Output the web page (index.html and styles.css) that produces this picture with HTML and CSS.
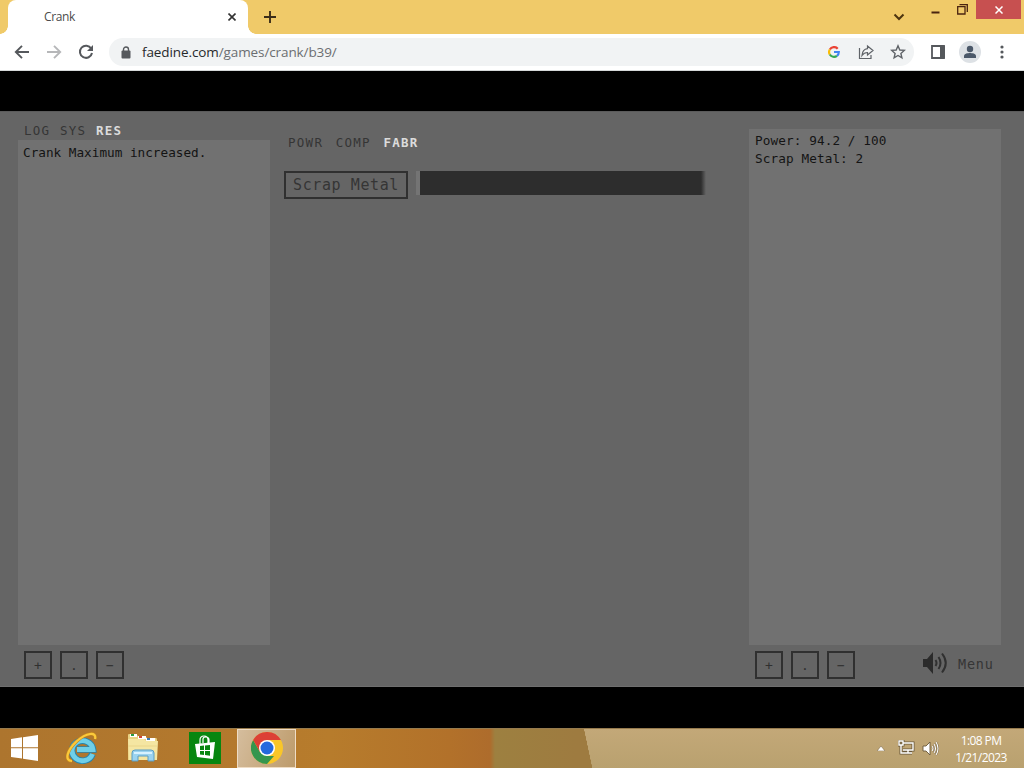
FILE: index.html
```
<!DOCTYPE html>
<html lang="en">
    <head>
        <meta charset="UTF-8">
        <title>Crank</title>
        <link rel="stylesheet" href="styles.css">
    </head>
    <body>
        <div class="titlebar">
            <div class="tab">
                <span class="tab-title">Crank</span>
                <svg class="tab-close" width="8" height="8" viewBox="0 0 8 8"><path d="M0.5 0.5L7.5 7.5M7.5 0.5L0.5 7.5" stroke="#333" stroke-width="1.6"/></svg>
            </div>
            <svg class="new-tab" width="12" height="12" viewBox="0 0 12 12"><path d="M6 0V12M0 6H12" stroke="#3b2d19" stroke-width="1.9"/></svg>
            <div class="window-buttons">
                <svg class="chevron" width="12" height="8" viewBox="0 0 12 8"><path d="M1.5 1.5L6 6L10.5 1.5" fill="none" stroke="#4d3510" stroke-width="2"/></svg>
                <svg class="minimize" width="9" height="3" viewBox="0 0 9 3"><path d="M0.5 1.5H8.5" stroke="#4a2410" stroke-width="2"/></svg>
                <svg class="restore" width="11" height="11" viewBox="0 0 11 11"><path d="M0.7 2.7H8V10H0.7ZM2.5 0.7H10.3V8" fill="none" stroke="#4a2410" stroke-width="1.3"/></svg>
                <div class="close"><svg width="8" height="8" viewBox="0 0 8 8"><path d="M0.5 0.5L7.5 7.5M7.5 0.5L0.5 7.5" stroke="#fff" stroke-width="1.5"/></svg></div>
            </div>
        </div>
        <div class="toolbar">
            <svg class="nav" width="16" height="16" viewBox="0 0 16 16"><path d="M15 8H2M8 1.8L1.8 8L8 14.2" fill="none" stroke="#55585c" stroke-width="1.9"/></svg>
            <svg class="nav" width="16" height="16" viewBox="0 0 16 16"><path d="M1 8H14M8 1.8L14.2 8L8 14.2" fill="none" stroke="#b6b7b9" stroke-width="1.9"/></svg>
            <svg class="nav" width="16" height="16" viewBox="0 0 16 16"><path d="M13.2 4.5A6.1 6.1 0 1 0 14 9" fill="none" stroke="#55585c" stroke-width="2"/><path d="M15 1V7H9Z" fill="#55585c"/></svg>
            <div class="address">
                <svg class="lock" width="10" height="13" viewBox="0 0 10 13"><path d="M2.5 5V3.5A2.5 2.5 0 0 1 7.5 3.5V5" fill="none" stroke="#56595d" stroke-width="1.4"/><rect x="0.5" y="4.5" width="9" height="8" rx="1" fill="#56595d"/></svg>
                <div class="url">faedine.com<span>/games/crank/b39/</span></div>
                <svg class="google" width="12" height="12" viewBox="0 0 12 12" fill="none" stroke-width="2.2"><path d="M9.7 2.7A4.9 4.9 0 0 0 1.8 3.5" stroke="#ea4335"/><path d="M1.8 3.5A4.9 4.9 0 0 0 1.8 8.5" stroke="#fbbc05"/><path d="M1.8 8.5A4.9 4.9 0 0 0 9 9.8" stroke="#34a853"/><path d="M9 9.8A4.9 4.9 0 0 0 10.8 6H6" stroke="#4285f4"/></svg>
                <svg class="share" width="16" height="16" viewBox="0 0 16 16" fill="none" stroke="#5f6368" stroke-width="1.2"><path d="M1.5 4V14.5H13V11"/><path d="M9.5 2L15 6.5L9.5 11V8.500C7 8.500 5.500 9.300 4 11.500C4.300 7.500 6.200 5.100 9.500 4.700Z"/></svg>
                <svg class="star" width="16" height="16" viewBox="0 0 16 16"><path d="M8 1.8L9.8 6L14.3 6.4L10.9 9.4L11.9 13.8L8 11.5L4.1 13.8L5.1 9.4L1.7 6.4L6.2 6Z" fill="none" stroke="#5f6368" stroke-width="1.4"/></svg>
            </div>
            <svg class="side-panel" width="14" height="14" viewBox="0 0 14 14"><path d="M1 1H13V13H1Z" fill="none" stroke="#55585c" stroke-width="1.8"/><path d="M9 1H14V13H9Z" fill="#55585c"/></svg>
            <svg class="avatar" width="22" height="22" viewBox="0 0 22 22"><circle cx="11" cy="11" r="11" fill="#dde1e5"/><circle cx="11" cy="8" r="3.2" fill="#4b5869"/><path d="M5 17V15C5 12.5 9 11.9 11 11.9S17 12.5 17 15V17Z" fill="#4b5869"/></svg>
            <svg class="dots" width="4" height="14" viewBox="0 0 4 14" fill="#55585c"><circle cx="2" cy="2" r="1.6"/><circle cx="2" cy="7" r="1.6"/><circle cx="2" cy="12" r="1.6"/></svg>
        </div>

        <div class="page">
            <div class="game">
                <div class="left">
                    <div class="tabs small-tabs"><span>LOG</span><span>SYS</span><span class="active">RES</span></div>
                    <div class="panel log">Crank Maximum increased.</div>
                    <div class="controls"><button>+</button><button>.</button><button>−</button></div>
                </div>
                <div class="center">
                    <div class="tabs main-tabs"><span>POWR</span><span>COMP</span><span class="active">FABR</span></div>
                    <div class="fabricate">
                        <button class="scrap">Scrap Metal</button>
                        <div class="bar"></div>
                    </div>
                </div>
                <div class="right">
                    <div class="panel resources">
                        <div>Power: 94.2 / 100</div>
                        <div>Scrap Metal: 2</div>
                    </div>
                    <div class="controls">
                        <button>+</button><button>.</button><button>−</button>
                        <svg class="sound" width="26" height="24" viewBox="0 0 26 24"><path d="M1 8H5L11 1V23L5 16H1Z" fill="#2b2b2b"/><path d="M13.5 9Q15.5 12 13.5 15M16.5 6Q20.5 12 16.5 18M20 2.5Q27.5 12 20 21.5" fill="none" stroke="#303030" stroke-width="2"/></svg>
                        <span class="menu">Menu</span>
                    </div>
                </div>
            </div>
        </div>

        <div class="taskbar">
            <svg class="windows" width="28" height="26" viewBox="0 0 28 26" fill="#fff"><path d="M0 4L11 2.3V12.2H0ZM12 2.2L27 0V12.2H12ZM0 13.3H11V23.5L0 22ZM12 13.3H27V26L12 23.7Z"/></svg>
            <svg class="explorer" width="32" height="32" viewBox="0 0 32 32"><path d="M26.500 22A10.500 10 0 1 1 27 17.500H11" fill="none" stroke="#2584ae" stroke-width="6.600"/><path d="M26.500 22A10.500 10 0 1 1 27 17.500H11" fill="none" stroke="#6fcfe8" stroke-width="4.800"/><path d="M6 29C-2 29 1 18 11 9C20 1 31 -1 29 7" fill="none" stroke="#c98a1c" stroke-width="3.200"/><path d="M6 29C-2 29 1 18 11 9C20 1 31 -1 29 7" fill="none" stroke="#fbc93b" stroke-width="2.200"/></svg>
            <svg class="files" width="32" height="30" viewBox="0 0 32 30"><path d="M1 2Q1 1 2 1H9L11 3H18L20 5H29Q30 5 30 7V27H1Z" fill="#e9d283"/><path d="M3 1H10V4H3Z" fill="#fff"/><path d="M4 1H7V3H4Z" fill="#279b43"/><path d="M11 3H19V6H11Z" fill="#fff"/><path d="M12 3H15V5H12Z" fill="#cf4533"/><path d="M19 5H28V8H19Z" fill="#fff"/><path d="M20 5H23V7H20Z" fill="#397ab4"/><path d="M1 6H17L19 8H31L30 27H2Z" fill="#f5e6a2"/><path d="M1 13H30" stroke="#ead68b"/><path d="M5 28V20Q5 17 8 17H24Q27 17 27 20V28H21V23H11V28Z" fill="#9bd3ef" stroke="#5b9dc2"/><path d="M7 20H25" stroke="#d7f2ff" stroke-width="2"/></svg>
            <svg class="store" width="32" height="32" viewBox="0 0 32 32"><path d="M0 0H32V32H0Z" fill="#078610"/><path d="M11 12V8Q11 4 15 4T19 8V11M14 11V7Q14 5 17 5T20 8V11" fill="none" stroke="#fff" stroke-width="1.2"/><path d="M6 12L26 10L24 27L8 25Z" fill="#fff"/><path d="M11 14L15 13.600V18H11ZM16 13.500L21 13V18H16ZM11 19H15V23L11 22.500ZM16 19H21V23.700L16 23Z" fill="#078610"/></svg>
            <div class="chrome">
                <svg width="32" height="32" viewBox="0 0 32 32"><circle cx="16" cy="16" r="16" fill="#f9c629"/><path d="M2.140 8L9 20L16 24H23L16 32A16 16 0 0 1 2.140 8Z" fill="#35964e"/><path d="M2.140 8A16 16 0 0 1 29.860 8H16L9 20Z" fill="#dc4035"/><circle cx="16" cy="16" r="8" fill="#fff"/><circle cx="16" cy="16" r="6.500" fill="#2369de"/></svg>
            </div>
            <div class="tray">
                <svg width="8" height="5" viewBox="0 0 8 5"><path d="M0 5L4 0L8 5Z" fill="#fff" stroke="#705d3e" stroke-width="0.5"/></svg>
                <svg class="network" width="17" height="16" viewBox="0 0 17 16" fill="none"><path d="M5 3H15V10H5M10 10V13M6 13H14M1 1H5V5H1ZM3 5V13H6" stroke="#6a583a" stroke-width="3"/><path d="M5 3H15V10H5M10 10V13M6 13H14M1 1H5V5H1ZM3 5V13H6" stroke="#fff" stroke-width="1.4"/></svg>
                <svg class="volume" width="17" height="15" viewBox="0 0 17 15"><path d="M10 5Q12 7.5 10 10M12 3Q15 7.5 12 12M14 1Q18 7.5 14 14" fill="none" stroke="#7b6847" stroke-width="2"/><path d="M1 5H4L8 1V14L4 10H1Z" fill="#fff" stroke="#6a583a" stroke-width="0.9"/><path d="M10 5Q12 7.5 10 10M12 3Q15 7.5 12 12M14 1Q18 7.5 14 14" fill="none" stroke="#fff" stroke-width="1.1"/></svg>
                <div class="clock"><div>1:08 PM</div><div>1/21/2023</div></div>
            </div>
        </div>
    </body>
</html>
```

FILE: styles.css
```
*{
    box-sizing: border-box;
}
body{
    margin: 0;
    width: 1024px;
    height: 768px;
    overflow: hidden;
    background: #000;
    font-family: "Open Sans", sans-serif;
}
svg{
    display: block;
    flex-shrink: 0;
}
.titlebar{
    display: flex;
    align-items: flex-start;
    height: 34px;
    background: #f0ca69;
}
.tab{
    display: flex;
    align-items: center;
    width: 240px;
    height: 34px;
    margin-left: 8px;
    padding: 0 12px 0 36px;
    border-radius: 8px 8px 0 0;
    background: #fff;
    position: relative;
}
/* curved feet of the selected tab */
.tab::before, .tab::after{
    content: "";
    position: absolute;
    bottom: 0;
    width: 8px;
    height: 8px;
}
.tab::before{
    left: -8px;
    background: radial-gradient(circle at 0 0, transparent 7.5px, #fff 8px);
}
.tab::after{
    right: -8px;
    background: radial-gradient(circle at 100% 0, transparent 7.5px, #fff 8px);
}
.tab-title{
    padding-bottom: 1px;
    font-size: 12px;
    letter-spacing: -0.4px;
    color: #4b4b4b;
}
.tab-close{
    margin-left: auto;
}
.new-tab{
    margin: 11px 0 0 16px;
}
.window-buttons{
    display: flex;
    align-items: flex-start;
    margin-left: auto;
    padding-right: 3px;
}
.chevron{
    margin: 13px 26px 0 0;
}
.minimize{
    margin: 11px 17px 0 0;
}
.restore{
    margin: 4px 8px 0 0;
}
.close{
    display: flex;
    align-items: center;
    justify-content: center;
    width: 45px;
    height: 19px;
    background: #c75050;
}
.toolbar{
    display: flex;
    align-items: center;
    height: 37px;
    padding: 0 20px 0 14px;
    background: #fff;
    border-bottom: 1px solid #d5d8d9;
}
.nav{
    margin-right: 16px;
}
.address{
    display: flex;
    align-items: center;
    width: 805px;
    height: 28px;
    margin-left: -1px;
    padding: 0 8px 0 12px;
    border-radius: 14px;
    background: #f1f3f4;
}
.url{
    margin-left: 11px;
    font-size: 13.5px;
    letter-spacing: -0.1px;
    color: #27292b;
}
.url span{
    color: #6b6e71;
}
.google{
    margin-left: auto;
}
.share{
    margin-left: 18px;
}
.star{
    margin-left: 16px;
}
.side-panel{
    margin-left: 17px;
}
.avatar{
    margin-left: 14px;
}
.dots{
    margin-left: auto;
}
.page{
    height: 657px;
    padding: 40px 0 41px;
    background: #000;
}
.game{
    display: flex;
    height: 576px;
    background: #656565;
    border-top: 1px solid #5b5b5b;
    border-bottom: 1px solid #6f6f6f;
    color: #353535;
    font-family: "DejaVu Sans Mono", monospace;
}
.left{
    width: 252px;
    margin-left: 18px;
    padding-top: 10px;
}
.center{
    width: 422px;
    margin-left: 14px;
    padding-top: 22px;
}
.right{
    width: 252px;
    margin-left: 43px;
    padding-top: 17px;
}
.tabs{
    display: flex;
    height: 18px;
    font-size: 12.5px;
    line-height: 17px;
    letter-spacing: 1.27px;
}
.small-tabs{
    gap: 9.6px;
    padding-left: 6px;
}
.main-tabs{
    gap: 12.5px;
    padding-left: 4px;
}
.active{
    color: #dcdcdc;
    font-weight: bold;
}
.panel{
    padding: 4px 6px;
    background: #717171;
    color: #141414;
    font-size: 12.7px;
    line-height: 18px;
}
.log{
    height: 505px;
    padding-left: 5px;
}
.resources{
    height: 516px;
    padding-top: 3px;
    letter-spacing: 0.1px;
}
.controls{
    display: flex;
    gap: 8px;
    padding: 6px 0 0 6px;
}
.controls button{
    width: 28px;
    height: 28px;
    padding: 0;
    border: 2px solid #303030;
    background: transparent;
    color: #303030;
    font: 13px "DejaVu Sans Mono", monospace;
}
.fabricate{
    display: flex;
    gap: 8px;
    margin-top: 19px;
}
.scrap{
    width: 124px;
    height: 28px;
    padding: 0 0 1px;
    border: 2px solid #303030;
    background: transparent;
    color: #353535;
    font: 15px "DejaVu Sans Mono", monospace;
    letter-spacing: 0.6px;
}
.bar{
    width: 290px;
    height: 24px;
    background: linear-gradient(to right, #747474 4px, #2d2d2d 4px, #2d2d2d 285px, #656565 290px);
}
.sound{
    margin-left: 59px;
}
.menu{
    font-size: 13.5px;
    letter-spacing: 0.8px;
    line-height: 26px;
    margin-left: 2px;
}
.taskbar{
    display: flex;
    align-items: center;
    height: 40px;
    padding: 0 0 1px 11px;
    background: linear-gradient(78deg, #9e7b40 50%, transparent 51%) 576px 0 / 24px 100% no-repeat, linear-gradient(to right, #ad752e 0, #b4792d 240px, #b77c2c 330px, #b2712a 450px, #ae6c2c 490px, #9d8040 495px, #9e7b40 576px, transparent 577px), linear-gradient(#c3a878, #b9a16f);
    border-top: 1px solid #967b4e;
}
.explorer{
    margin-left: 27px;
}
.files{
    margin-left: 29px;
}
.store{
    margin-left: 30px;
}
.chrome{
    display: flex;
    align-items: center;
    justify-content: center;
    width: 59px;
    height: 39px;
    margin-left: 16px;
    border: 1px solid #efdcc4;
    background: linear-gradient(110deg, #d5bd9d, #bd9b6b);
}
.tray{
    display: flex;
    align-items: center;
    margin-left: auto;
    padding-right: 17px;
}
.network{
    margin-left: 13px;
}
.volume{
    margin-left: 7px;
}
.clock{
    width: 52px;
    margin-left: 16px;
    padding-top: 1px;
    color: #fff;
    font-size: 12px;
    line-height: 17px;
    letter-spacing: -0.6px;
    text-align: center;
    white-space: nowrap;
}
```
